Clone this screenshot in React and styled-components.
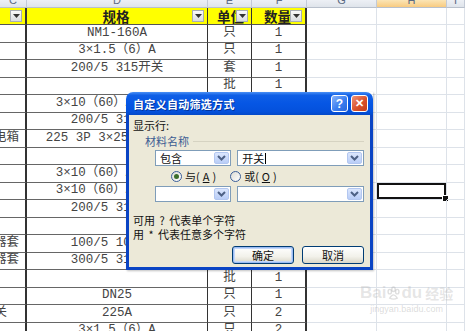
import React from 'react';
import styled, { createGlobalStyle } from 'styled-components';

const GlobalStyle = createGlobalStyle`
  html, body {
    margin: 0;
    padding: 0;
    background: #ffffff;
  }
  * {
    box-sizing: border-box;
  }
`;

const cols = ['C', 'D', 'E', 'F', 'G', 'H', 'I'];

// [C, D, E, F, right padding of C]
const rows = [
  ['', 'NM1-160A', '只', '1'],
  ['', '3×1.5（6）A', '只', '1'],
  ['', '200/5 315开关', '套', '1'],
  ['', '', '批', '1'],
  ['', '3×10（60）A 电度表', '只', '1'],
  ['', '200/5 315开关', '套', '1'],
  ['动力配电箱', '225 3P 3×250A 配电柜', '台', '1'],
  ['', '', '', ''],
  ['', '3×10（60）A 电度表', '只', '1'],
  ['', '3×10（60）A 电度表', '只', '1'],
  ['', '200/5 315开关', '套', '1'],
  ['', '', '', ''],
  ['电流互感器套', '100/5 100开关', '套', '1'],
  ['电流互感器套', '300/5 315开关', '套', '1'],
  ['', '', '批', '1'],
  ['', 'DN25', '只', '1'],
  ['空气开关', '225A', '只', '2', 18],
  ['', '3×1.5（6）A', '只', '2'],
];

const Arrow = () => (
  <svg width="7" height="4" viewBox="0 0 7 4">
    <path d="M0 0 L7 0 L3.5 4 Z" fill="#333" />
  </svg>
);

const Chevron = () => (
  <svg width="9" height="6" viewBox="0 0 9 6">
    <path d="M1 1 L4.5 4.5 L8 1" stroke="#4d6185" strokeWidth="2" fill="none" />
  </svg>
);

const Paw = () => (
  <svg width="15" height="15" viewBox="0 0 16 16">
    <g fill="none" stroke="rgba(175,175,175,0.4)" strokeWidth="1.5">
      <ellipse cx="4" cy="6" rx="1.8" ry="2.4" />
      <ellipse cx="8" cy="3.5" rx="1.8" ry="2.4" />
      <ellipse cx="12" cy="6" rx="1.8" ry="2.4" />
      <path d="M4 13 Q8 6 12 13 Q8 15 4 13 Z" />
    </g>
  </svg>
);

export default function App() {
  return (
    <>
      <GlobalStyle />
      <Screen>
        <Sheet>
          {cols.map((c) => (
            <ColHead key={c} $active={c === 'H'}>
              <span>{c}</span>
            </ColHead>
          ))}

          <HeadCell>
            <FilterBtn><Arrow /></FilterBtn>
          </HeadCell>
          <HeadCell>
            规格
            <FilterBtn><Arrow /></FilterBtn>
          </HeadCell>
          <HeadCell $left>
            单位
            <FilterBtn><Arrow /></FilterBtn>
          </HeadCell>
          <HeadCell $edge>
            数量
            <FilterBtn><Arrow /></FilterBtn>
          </HeadCell>
          <GridCell />
          <GridCell />
          <GridCell />

          {rows.map((r, i) => (
            <React.Fragment key={i}>
              <Cell $first $align="right" $pad={r[4] ?? 6}>{r[0]}</Cell>
              <Cell>{r[1]}</Cell>
              <Cell>{r[2]}</Cell>
              <Cell $edge>{r[3]}</Cell>
              <GridCell />
              <GridCell $selected={i === 9} />
              <GridCell />
            </React.Fragment>
          ))}
        </Sheet>

        <Dialog>
          <TitleBar>
            <Title>自定义自动筛选方式</Title>
            <TitleButtons>
              <TitleBtn $kind="help">?</TitleBtn>
              <TitleBtn $kind="close">✕</TitleBtn>
            </TitleButtons>
          </TitleBar>
          <DialogBody>
            <Label>显示行:</Label>
            <Legend>材料名称</Legend>
            <CriteriaRow>
              <Combo $w={77}>
                <ComboText>包含</ComboText>
                <DropBtn><Chevron /></DropBtn>
              </Combo>
              <Combo $w={128}>
                <ComboText>开关<Caret /></ComboText>
                <DropBtn><Chevron /></DropBtn>
              </Combo>
            </CriteriaRow>
            <RadioRow>
              <RadioItem>
                <Radio $checked />
                与(<u>A</u>)
              </RadioItem>
              <RadioItem>
                <Radio />
                或(<u>O</u>)
              </RadioItem>
            </RadioRow>
            <CriteriaRow $tight>
              <Combo $w={77}>
                <ComboText />
                <DropBtn><Chevron /></DropBtn>
              </Combo>
              <Combo $w={128}>
                <ComboText />
                <DropBtn><Chevron /></DropBtn>
              </Combo>
            </CriteriaRow>
            <Hint>
              <div>可用 ? 代表单个字符</div>
              <div>用 * 代表任意多个字符</div>
            </Hint>
            <ButtonRow>
              <PushBtn $default>确定</PushBtn>
              <PushBtn>取消</PushBtn>
            </ButtonRow>
          </DialogBody>
        </Dialog>

        <Watermark>
          <Brand>
            Bai<Paw />du <small>经验</small>
          </Brand>
          <Site>jingyan.baidu.com</Site>
        </Watermark>
      </Screen>
    </>
  );
}

const Screen = styled.div`
  position: relative;
  width: 465px;
  height: 331px;
  overflow: hidden;
  background: #ffffff;
`;

const Sheet = styled.div`
  display: grid;
  grid-template-columns: 27px 181px 44px 55px 70px 70px 18px;
  grid-template-rows: 8px 17px;
  grid-auto-rows: 17.5px;
  font-family: 'Liberation Mono', 'Noto Sans CJK SC', monospace;
  font-size: 12.5px;
  color: #444;
`;

const ColHead = styled.div`
  overflow: hidden;
  text-align: center;
  background: ${(p) =>
    p.$active
      ? 'linear-gradient(#fbe5b6, #f8cb80)'
      : 'linear-gradient(#edf0f5, #dfe4eb)'};
  border-right: 1px solid #c3cad6;
  border-bottom: 1px solid #b8c0cc;
  font-family: 'Liberation Sans', sans-serif;
  font-size: 11px;
  color: #5b6a84;

  span {
    display: block;
    line-height: 14px;
    margin-top: -7px;
  }
`;

const HeadCell = styled.div`
  position: relative;
  display: flex;
  align-items: center;
  justify-content: ${(p) => (p.$left ? 'flex-start' : 'center')};
  padding-left: ${(p) => (p.$left ? '9px' : '0')};
  padding-right: ${(p) => (p.$left ? '0' : '2px')};
  background: #ffff00;
  border-right: ${(p) => (p.$edge ? '2px' : '1px')} solid #333;
  border-bottom: 1px solid #555;
  font-family: 'Noto Sans CJK SC', sans-serif;
  font-weight: 700;
  font-size: 13.5px;
  color: #222;
  overflow: hidden;
  white-space: nowrap;

  &:nth-child(8) {
    border-right-width: 2px;
  }
`;

const FilterBtn = styled.div`
  position: absolute;
  right: 3px;
  top: 2px;
  width: 12px;
  height: 12px;
  display: flex;
  align-items: center;
  justify-content: center;
  background: linear-gradient(#fafafa, #d9dcdf);
  border: 1px solid #a8adb3;
`;

const Cell = styled.div`
  display: flex;
  align-items: center;
  justify-content: ${(p) => (p.$align === 'right' ? 'flex-end' : 'center')};
  padding-right: ${(p) => (p.$align === 'right' ? `${p.$pad}px` : '0')};
  white-space: nowrap;
  overflow: hidden;
  border-right: ${(p) => (p.$first || p.$edge ? '2px' : '1px')} solid #333;
  border-bottom: 1px solid #666;
  line-height: 17px;
`;

const GridCell = styled.div`
  position: relative;
  border-right: 1px solid #dde2e9;
  border-bottom: 1px solid #dde2e9;
  box-shadow: ${(p) => (p.$selected ? 'inset 0 0 0 2px #111' : 'none')};

  &::after {
    content: '';
    display: ${(p) => (p.$selected ? 'block' : 'none')};
    position: absolute;
    right: -3px;
    bottom: -3px;
    width: 5px;
    height: 5px;
    background: #111;
    border: 1px solid #fff;
  }
`;

const Dialog = styled.div`
  position: absolute;
  left: 126px;
  top: 92px;
  width: 247px;
  height: 178px;
  display: flex;
  flex-direction: column;
  font-family: 'Noto Sans CJK SC', sans-serif;
  box-shadow: 1px 1px 2px rgba(0, 0, 0, 0.25);
`;

const TitleBar = styled.div`
  height: 23px;
  flex: none;
  display: flex;
  align-items: center;
  justify-content: space-between;
  padding: 0 5px 0 7px;
  border-radius: 7px 7px 0 0;
  background: linear-gradient(
    #4a90f5 0%,
    #0f5fe6 14%,
    #0656e4 50%,
    #0451dc 85%,
    #0449c8 100%
  );
`;

const Title = styled.div`
  color: #ffffff;
  font-size: 11px;
  font-weight: 700;
  letter-spacing: 0.3px;
  text-shadow: 1px 1px 0 rgba(0, 20, 90, 0.5);
`;

const TitleButtons = styled.div`
  display: flex;
  gap: 3px;
`;

const TitleBtn = styled.div`
  width: 17px;
  height: 17px;
  display: flex;
  align-items: center;
  justify-content: center;
  border: 1px solid #ffffff;
  border-radius: 3px;
  color: #ffffff;
  font-family: 'Liberation Sans', sans-serif;
  font-weight: 700;
  font-size: ${(p) => (p.$kind === 'close' ? '11px' : '12px')};
  background: ${(p) =>
    p.$kind === 'close'
      ? 'linear-gradient(135deg, #f09478, #d9512c 55%, #c23e1a)'
      : 'linear-gradient(135deg, #8ab4fa, #3a7ef0 55%, #2a66dc)'};
`;

const DialogBody = styled.div`
  flex: 1;
  display: flex;
  flex-direction: column;
  background: #ece9d8;
  border: 3px solid #0a44c4;
  border-top: none;
  padding: 3px 6px 0 4px;
  font-size: 11px;
  color: #111;
`;

const Label = styled.div`
  line-height: 14px;
`;

const Legend = styled.div`
  display: flex;
  align-items: center;
  gap: 4px;
  margin: 3px 0 0 12px;
  line-height: 13px;
  color: #3c5c93;

  &::after {
    content: '';
    flex: 1;
    height: 1px;
    background: #d6d3c2;
  }
`;

const CriteriaRow = styled.div`
  display: flex;
  gap: 6px;
  margin: ${(p) => (p.$tight ? '0' : '2px')} 0 0 22px;
`;

const Combo = styled.div`
  width: ${(p) => p.$w}px;
  height: 16px;
  display: flex;
  background: #ffffff;
  border: 1px solid #7f9db9;
`;

const ComboText = styled.div`
  flex: 1;
  display: flex;
  align-items: center;
  padding-left: 4px;
  font-size: 11px;
  line-height: 14px;
`;

const Caret = styled.span`
  display: inline-block;
  width: 1px;
  height: 11px;
  margin-left: 1px;
  background: #000;
`;

const DropBtn = styled.div`
  width: 15px;
  display: flex;
  align-items: center;
  justify-content: center;
  margin: 1px;
  border-radius: 2px;
  background: linear-gradient(#dbe6fd, #b9cdf7);
  border: 1px solid #b3c7f0;
`;

const RadioRow = styled.div`
  display: flex;
  gap: 14px;
  height: 20px;
  align-items: center;
  margin-left: 38px;
`;

const RadioItem = styled.label`
  display: flex;
  align-items: center;
  gap: 3px;
  font-size: 11px;

  u {
    text-decoration: underline;
  }
`;

const Radio = styled.span`
  position: relative;
  width: 11px;
  height: 11px;
  border-radius: 50%;
  border: 1px solid #3b5f9a;
  background: linear-gradient(135deg, #dcdcd4, #ffffff);

  &::after {
    content: '';
    display: ${(p) => (p.$checked ? 'block' : 'none')};
    position: absolute;
    left: 2px;
    top: 2px;
    width: 5px;
    height: 5px;
    border-radius: 50%;
    background: #3c6e2c;
  }
`;

const Hint = styled.div`
  margin-top: 11px;
  line-height: 14px;
  font-size: 11px;
  white-space: pre;
  word-spacing: 2px;
`;

const ButtonRow = styled.div`
  display: flex;
  justify-content: flex-end;
  gap: 8px;
  margin-top: 5px;
`;

const PushBtn = styled.div`
  width: 62px;
  height: 18px;
  display: flex;
  align-items: center;
  justify-content: center;
  font-size: 11px;
  border: 1px solid #003c74;
  border-radius: 3px;
  background: linear-gradient(#ffffff, #f2f1ea 60%, #d9d6c8);
  box-shadow: ${(p) =>
    p.$default ? 'inset 0 0 0 1px #9bbcf3, inset 0 0 0 2px #c4d7f9' : 'none'};
`;

const Watermark = styled.div`
  position: absolute;
  left: 360px;
  top: 283px;
  display: flex;
  flex-direction: column;
  align-items: center;
  pointer-events: none;
`;

const Brand = styled.div`
  display: flex;
  align-items: center;
  height: 20px;
  font-family: 'Liberation Sans', sans-serif;
  font-weight: 700;
  font-size: 17px;
  color: rgba(175, 175, 175, 0.32);

  small {
    font-family: 'Noto Sans CJK SC', sans-serif;
    font-size: 14px;
    margin-left: 3px;
  }
`;

const Site = styled.div`
  font-family: 'Liberation Sans', sans-serif;
  font-size: 9px;
  line-height: 12px;
  color: rgba(175, 175, 175, 0.45);
`;
